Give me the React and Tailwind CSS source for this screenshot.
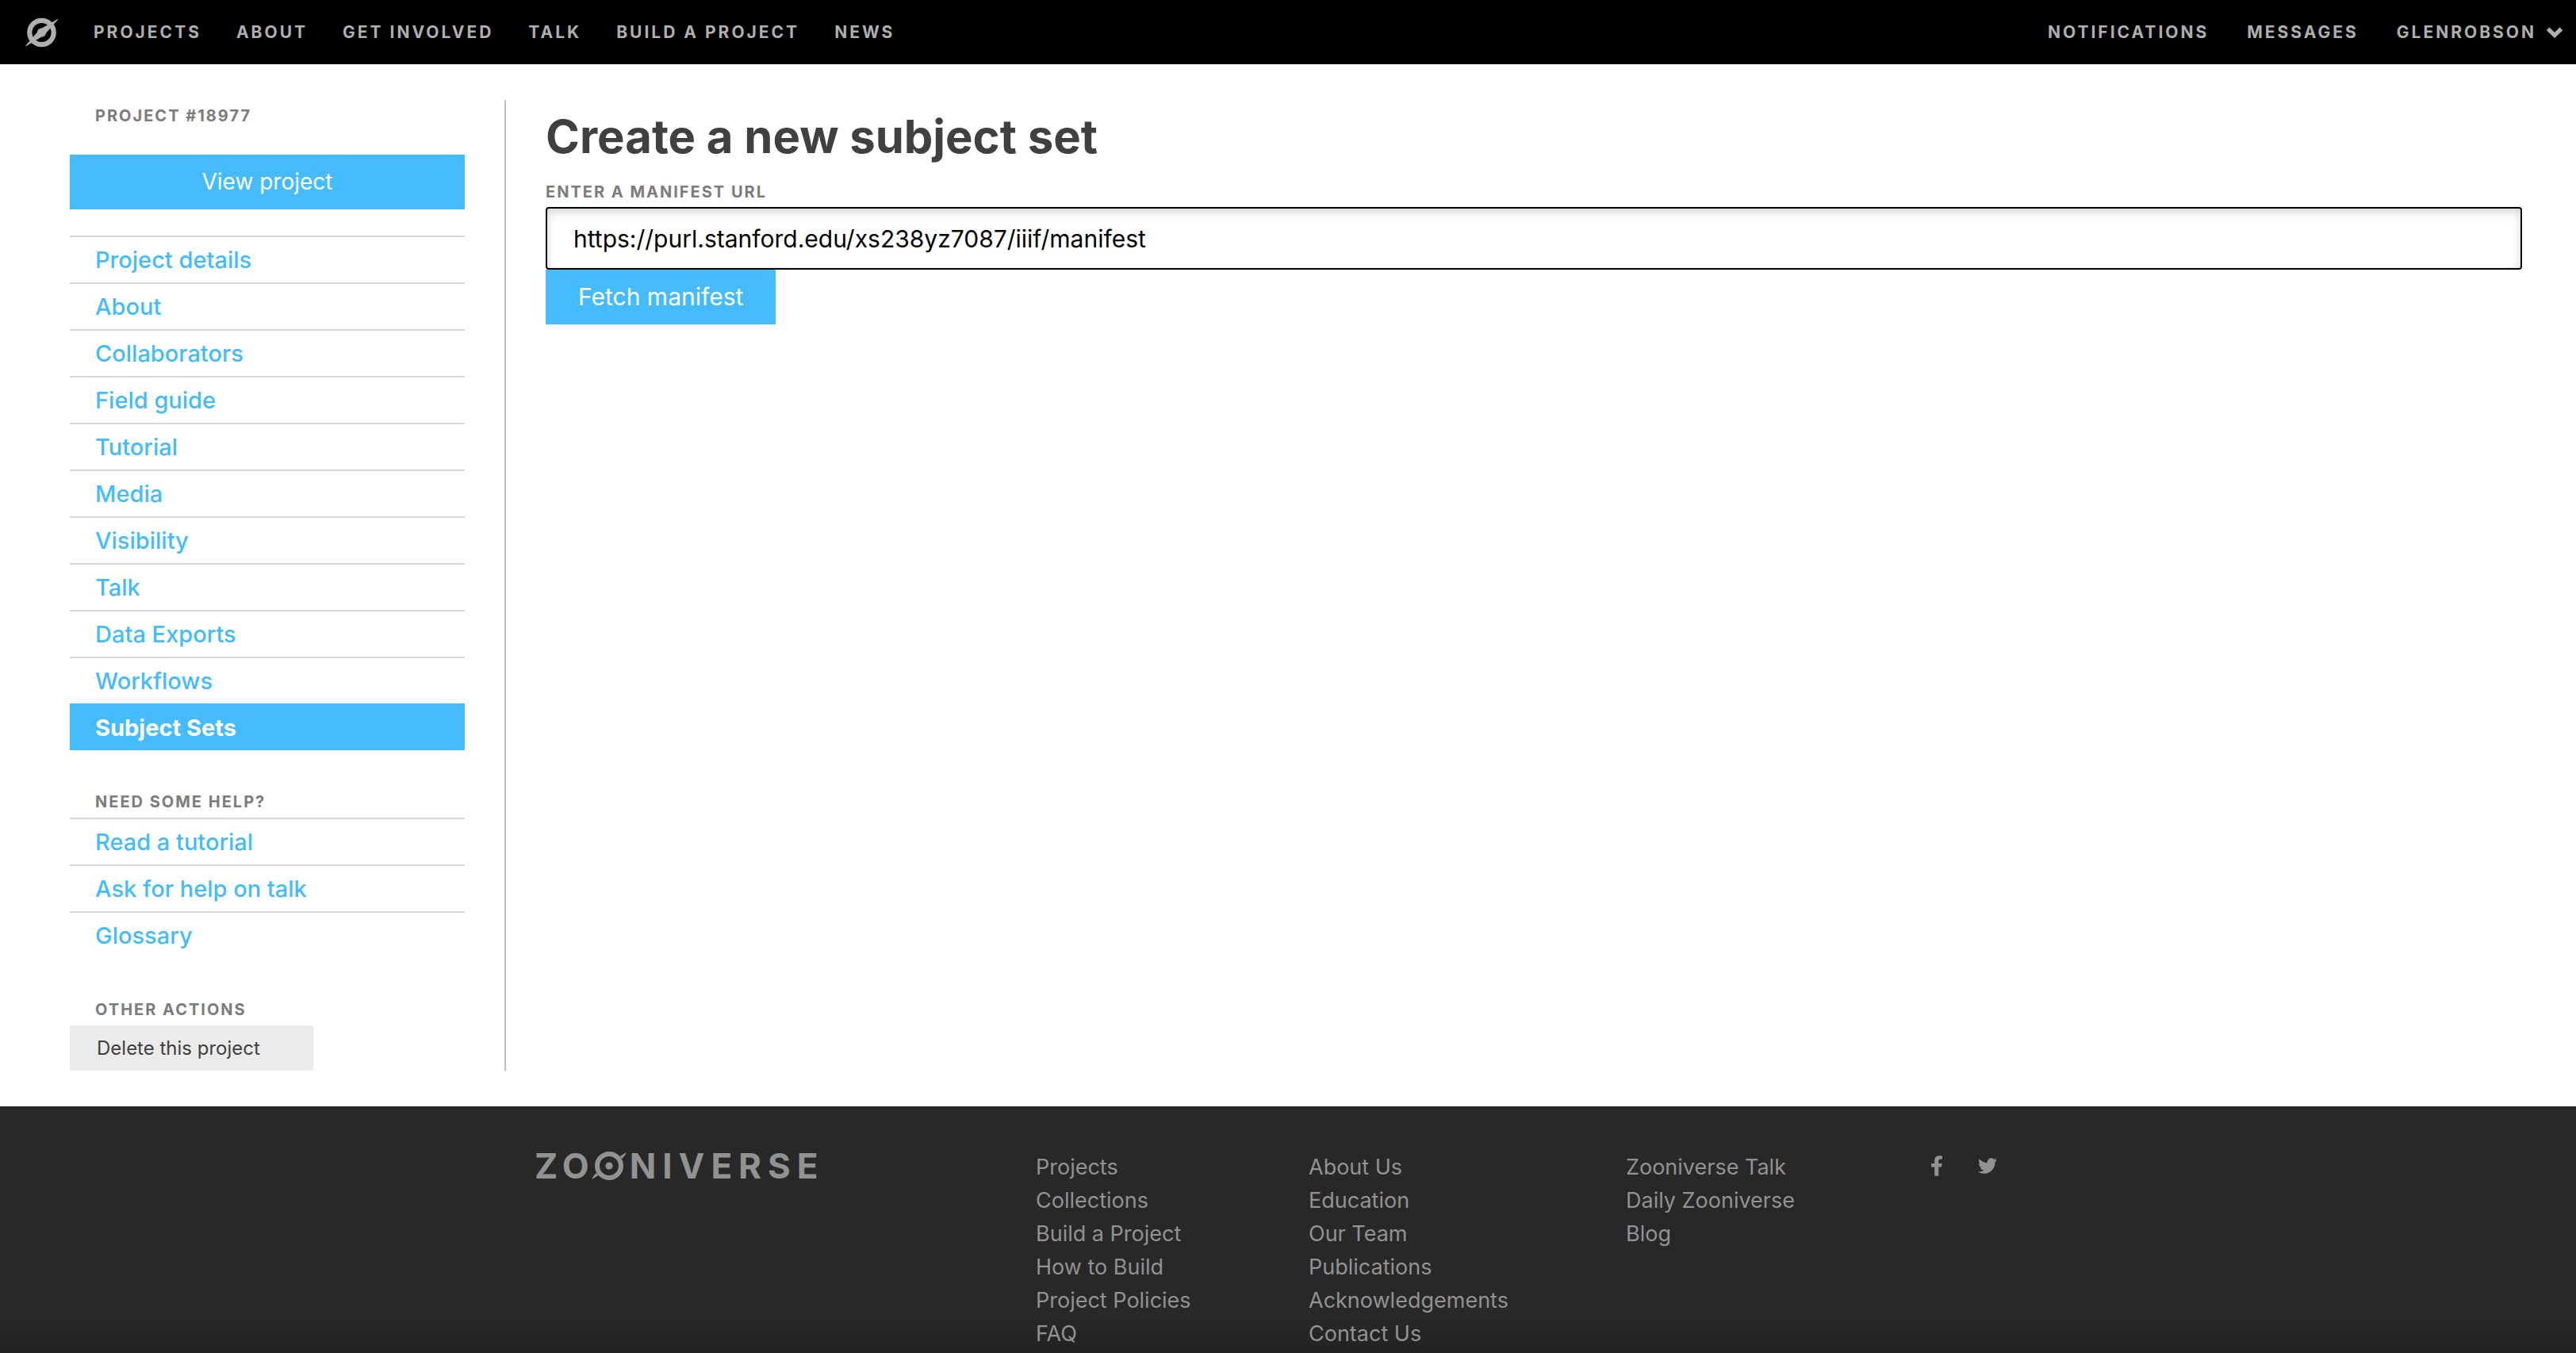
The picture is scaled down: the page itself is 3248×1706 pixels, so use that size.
import { useState } from "react";
import { FaFacebookF, FaTwitter } from "react-icons/fa";

const siteLinks = ["Projects", "About", "Get involved", "Talk", "Build a project", "News"];
const accountLinks = ["Notifications", "Messages"];
const projectLinks = [
  "Project details",
  "About",
  "Collaborators",
  "Field guide",
  "Tutorial",
  "Media",
  "Visibility",
  "Talk",
  "Data Exports",
  "Workflows",
  "Subject Sets",
];
const helpLinks = ["Read a tutorial", "Ask for help on talk", "Glossary"];
const footerColumns = [
  ["Projects", "Collections", "Build a Project", "How to Build", "Project Policies", "FAQ"],
  ["About Us", "Education", "Our Team", "Publications", "Acknowledgements", "Contact Us"],
  ["Zooniverse Talk", "Daily Zooniverse", "Blog"],
];

function LogoMark() {
  return (
    <svg viewBox="0 0 42 38" className="h-[38px] w-[42px]" fill="currentColor" aria-hidden="true">
      <circle cx="20.5" cy="19" r="15.2" fill="none" stroke="currentColor" strokeWidth="6.2" />
      <circle cx="20.5" cy="19" r="5.6" />
      <path d="M40.6 2 L41.2 2.6 L24.6 21.6 L21.2 24 L0.8 36.2 L0.2 35.6 L16.6 16.8 L20 14 Z" />
    </svg>
  );
}

function RingLetter() {
  return (
    <svg viewBox="0 0 44 38" className="-ml-1 mr-1 h-[38px] w-[44px]" fill="currentColor" aria-hidden="true">
      <circle cx="22" cy="19" r="15" fill="none" stroke="currentColor" strokeWidth="6" />
      <circle cx="22" cy="19" r="4.6" />
      <path d="M43 2.6 L43.6 3.4 L38.5 10 L35.5 7 Z" />
      <path d="M1 35.4 L0.4 34.6 L5.5 28 L8.5 31 Z" />
    </svg>
  );
}

function SectionLabel({ children }) {
  return (
    <h2 className="pl-8 text-[20px] leading-10 font-bold tracking-[2px] text-[#7c7c7c] uppercase">
      {children}
    </h2>
  );
}

function SideList({ items, current }) {
  return (
    <ul>
      {items.map((item) => (
        <li key={item}>
          <a
            href="#"
            aria-current={item === current ? "page" : undefined}
            className={
              item === current
                ? "block border-t-2 border-[#43bbfd] bg-[#43bbfd] pl-8 text-[29px] leading-[57px] font-bold text-white"
                : "block border-t-2 border-[#d8d8d8] pl-8 text-[29px] leading-[57px] font-medium text-[#43bbfd]"
            }
          >
            {item}
          </a>
        </li>
      ))}
    </ul>
  );
}

export default function App() {
  const [url, setUrl] = useState("https://purl.stanford.edu/xs238yz7087/iiif/manifest");

  return (
    <div className="flex min-h-screen flex-col bg-white font-['Inter',sans-serif]">
      <header className="flex h-[81px] items-center justify-between bg-black pr-4 pl-8 text-[21px] font-bold tracking-[3px] text-[#afafaf] uppercase">
        <nav className="flex items-center gap-11">
          <a href="#" aria-label="Zooniverse home">
            <LogoMark />
          </a>
          {siteLinks.map((link) => (
            <a key={link} href="#">
              {link}
            </a>
          ))}
        </nav>
        <nav className="flex items-center gap-12">
          {accountLinks.map((link) => (
            <a key={link} href="#">
              {link}
            </a>
          ))}
          <button type="button" className="flex items-center gap-3 tracking-[3px] uppercase">
            Glenrobson
            <svg viewBox="0 0 22 14" className="h-[14px] w-[22px]" fill="currentColor" aria-hidden="true">
              <path d="M11 14 L0.8 4.2 L4.4 0.4 L11 6.8 L17.6 0.4 L21.2 4.2 Z" />
            </svg>
          </button>
        </nav>
      </header>

      <div className="flex pt-[45px] pr-[68px] pb-[45px] pl-[88px]">
        <aside className="w-[550px] shrink-0 border-r-2 border-[#bfbfbf] pr-[50px]">
          <SectionLabel>Project #18977</SectionLabel>
          <a
            href="#"
            className="mt-[29px] mb-[33px] block bg-[#43bbfd] text-center text-[28px] leading-[69px] text-white"
          >
            View project
          </a>
          <SideList items={projectLinks} current="Subject Sets" />
          <div className="mt-[45px]">
            <SectionLabel>Need some help?</SectionLabel>
            <SideList items={helpLinks} />
          </div>
          <div className="mt-[45px]">
            <SectionLabel>Other actions</SectionLabel>
            <button
              type="button"
              className="block w-[307px] bg-[#ebebeb] pl-[34px] text-left text-[24px] leading-[57px] text-[#404040]"
            >
              Delete this project
            </button>
          </div>
        </aside>

        <main className="flex-1 pl-[50px]">
          <h1 className="text-[58px] leading-[92px] font-bold text-[#404040]">Create a new subject set</h1>
          <form onSubmit={(event) => event.preventDefault()}>
            <label
              htmlFor="manifest-url"
              className="mt-1.5 block text-[20px] leading-[37px] font-bold tracking-[2px] text-[#7c7c7c] uppercase"
            >
              Enter a manifest URL
            </label>
            <input
              id="manifest-url"
              type="text"
              value={url}
              onChange={(event) => setUrl(event.target.value)}
              className="block h-[79px] w-full rounded-[4px] border-2 border-black px-[33px] text-[30px] text-black shadow-[inset_0_4px_12px_rgba(0,0,0,0.18)] outline-none"
            />
            <button
              type="submit"
              className="block bg-[#43bbfd] px-[41px] text-[30px] leading-[69px] text-white"
            >
              Fetch manifest
            </button>
          </form>
        </main>
      </div>

      <footer className="flex-1 bg-[#282828] bg-linear-to-b from-[#282828] from-85% to-[#222222] pt-14 text-[#929292]">
        <div className="mx-auto grid w-full max-w-[1900px] grid-cols-[632fr_344fr_400fr_384fr_140fr]">
          <a
            href="#"
            aria-label="Zooniverse"
            className="flex h-[38px] items-center self-start text-[44px] leading-[38px] font-bold"
          >
            <span className="tracking-[7px]">ZO</span>
            <RingLetter />
            <span className="tracking-[8px]">NIVERSE</span>
          </a>
          {footerColumns.map((column) => (
            <ul key={column[0]} className="text-[27px] leading-[42px]">
              {column.map((item) => (
                <li key={item}>
                  <a href="#">{item}</a>
                </li>
              ))}
            </ul>
          ))}
          <div className="flex h-[38px] items-center gap-11 self-start">
            <a href="#" aria-label="Facebook">
              <FaFacebookF className="h-[26px] w-4" />
            </a>
            <a href="#" aria-label="Twitter">
              <FaTwitter className="size-6" />
            </a>
          </div>
        </div>
      </footer>
    </div>
  );
}
